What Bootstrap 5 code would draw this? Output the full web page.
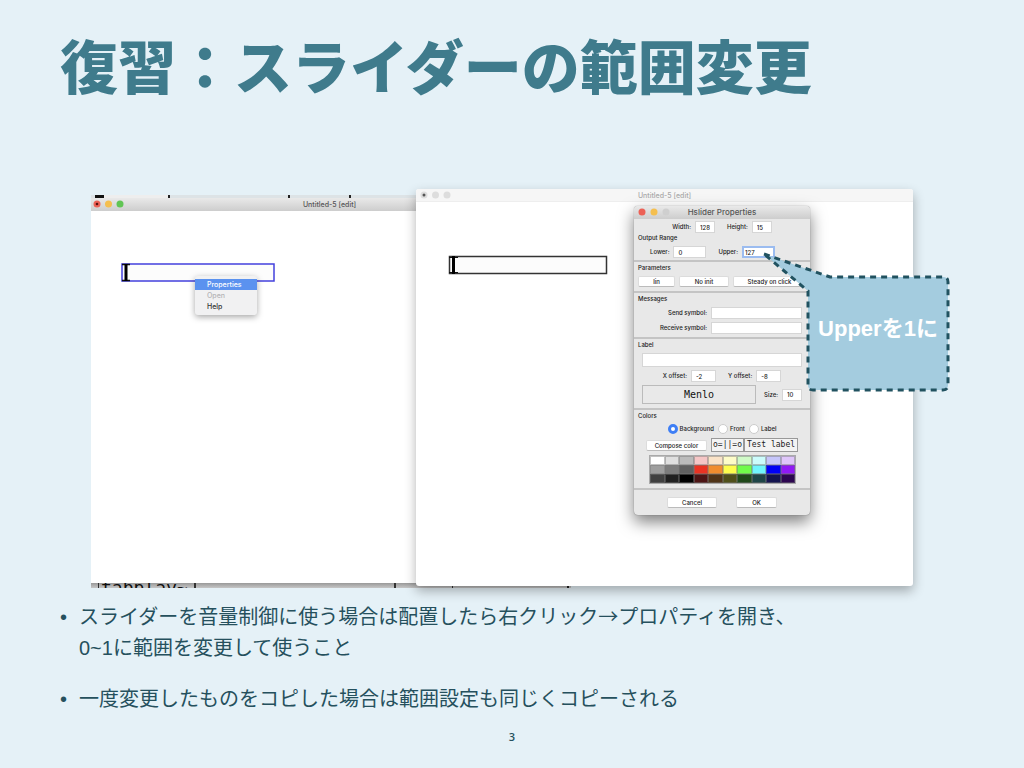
<!DOCTYPE html>
<html lang="ja">
<head>
<meta charset="utf-8">
<meta name="viewport" content="width=device-width, initial-scale=1">
<title>復習：スライダーの範囲変更</title>
<link href="https://cdn.jsdelivr.net/npm/bootstrap@5.3.0/dist/css/bootstrap.min.css" rel="stylesheet">
<style>
  body { background: #e5f1f7; color: #25505d; font-family: "Liberation Sans", "Noto Sans CJK JP", sans-serif; }
  .slide { padding: 28px 60px 0; }
  .slide h1 { font: 900 58px/72px "Noto Sans CJK JP", sans-serif; color: #3f7b8c; }
  .desktop { margin: 89px 51px 0 31px; font-family: Inter, sans-serif; font-weight: 500; color: #333; }
  .pane-left { flex: 325 1 0; min-width: 0; margin-top: 6px; position: relative; }
  .pane-right { flex: 497 1 0; min-width: 0; height: 397px; background: #fff; border-radius: 3px; box-shadow: 0 5px 12px rgba(0,0,0,.3); position: relative; }

  /* windows peeking out behind the left one */
  .peek-top { height: 3px; background: linear-gradient(90deg, transparent 4px, #111 4px 13px, #eee 13px 77px, #222 77px 79px, transparent 79px 197px, #222 197px 199px, transparent 199px 258px, #222 258px 260px, transparent 260px), #dde3e6; }
  .peek-bottom { width: 480px; height: 5px; overflow: hidden; color: #111; font: 18px/20px "DejaVu Sans Mono", monospace; background: linear-gradient(90deg, transparent 7px, #333 7px 8px, transparent 8px 103px, #333 103px 105px, transparent 105px 303px, #333 303px 305px, transparent 305px 361px, #333 361px 362px, transparent 362px 476px, #222 476px 478px, transparent 478px), linear-gradient(#999, #c6c6c6); }
  .peek-bottom span { display: block; margin: -5px 0 0 10px; }

  .titlebar { height: 13px; font-size: 7px; line-height: 13px; color: #555; background: linear-gradient(#e9e9e9, #cdcdcd); position: relative; text-align: center; }
  .pane-right > .titlebar { background: #f6f6f6; color: #aaa; border-radius: 3px 3px 0 0; border-bottom: 1px solid #eee; }
  .pane-left > .titlebar { padding-left: 152px; }
  .titlebar svg { position: absolute; left: 2px; top: 2px; }
  .canvas-left { height: 372px; background: #fff; position: relative; }
  .hslider { position: absolute; display: block; }
  .ctx-menu { position: absolute; left: 104px; top: 65px; width: 62px; padding: 3px 0; background: #f1f1f2; border-radius: 3px; box-shadow: 0 2px 6px rgba(0,0,0,.35); font-size: 7px; line-height: 11px; }
  .ctx-menu button { display: block; width: 100%; border: 0; padding: 0 0 0 12px; background: none; text-align: left; color: #333; font-weight: 500; }
  .ctx-menu button.picked { background: #5b92ef; color: #fff; }
  .ctx-menu button:disabled { color: #b4b4b6; }

  .dialog-box { position: absolute; left: 218px; top: 17px; width: 176px; background: #e8e8e8; border-radius: 4px; box-shadow: 0 7px 16px rgba(0,0,0,.5), 0 0 1px #777; font-size: 6px; line-height: 10px; color: #222; }
  .dialog-box > .titlebar { font-size: 8px; border-radius: 4px 4px 0 0; }
  .dialog-box > .titlebar svg { left: 4px; }
  .dialog-box fieldset { border-bottom: 2px solid #c4c4c4; padding: 1px 8px 0; height: 71px; }
  .dialog-box legend { font-size: 6px; line-height: 10px; margin: 0 0 3px -4px; }
  .dialog-box .range-set { height: 29px; padding-top: 0; }
  .dialog-box .param-set { height: 31px; }
  .dialog-box .message-set { height: 46px; }
  .dialog-box .color-set { height: 80px; }
  .dialog-box .param-keys { margin: 0 -4px; }
  .size-row { padding-top: 2px; }
  .dialog-box input[type=text] { border: 1px solid #d6d6d6; background: #fff; height: 12px; padding: 0 4px; font: 500 6px/10px Inter, sans-serif; color: #222; min-width: 0; border-radius: 0; }
  .dialog-box input.editing { border: 2px solid #9bbcf0; padding: 0 1px; }
  .dialog-box input.wide { width: 91px; }
  .dialog-box input.label-text { height: 14px; }
  .dialog-box .key { height: 11px; border: 1px solid #dcdcdc; border-bottom-color: #bbb; background: #fff; border-radius: 2px; padding: 0; font-size: 6px; font-weight: 500; line-height: 9px; color: #222; }
  .w20 { width: 20px; } .w24 { width: 25px; } .w33 { width: 33px; }
  .w37 { width: 37px; } .w41 { width: 41px; } .w50 { width: 50px; } .w61 { width: 61px; }
  .dialog-box input[type=radio] { appearance: none; width: 10px; height: 10px; border: 1px solid #ccc; border-radius: 50%; background: #fff; margin: 0 2px 0 0; }
  .dialog-box input[type=radio]:checked { border: 3px solid #3f7ff5; }
  .gp { gap: 4px; }
  .gap3 { margin-top: 3px; }
  .mono-box { font: 8px/12px "DejaVu Sans Mono", monospace; border: 1px solid #999; background: #f3f3f3; text-align: center; }
  .palette { display: grid; grid-template-columns: repeat(10, 1fr); margin: 3px 6px 0 7px; border: 1px solid #aaa; }
  .palette button { height: 9px; border: 1px solid rgba(120,120,120,.45); padding: 0; }
  .font-key { flex: 1; height: 19px; border: 1px solid #bbb; background: #e9e9e9; font: 10px/17px "DejaVu Sans Mono", monospace; padding: 0; color: #111; }
  .end-keys { gap: 19px; padding: 7px 0; }

  .callout { position: absolute; left: 126px; top: 44px; width: 192px; height: 144px; font: 700 22px/32px "Liberation Sans", "Noto Sans CJK JP", sans-serif; color: #fff; }
  .callout svg { position: absolute; inset: 0; }
  .callout p { position: absolute; left: 48px; right: 4px; top: 63px; margin: 0; text-align: center; white-space: nowrap; }

  .notes { margin: 14px 0 0; padding: 0; list-style: none; font-size: 20px; line-height: 31px; }
  .notes li { display: flex; margin-bottom: 20px; }
  .notes li::before { content: "•"; width: 19px; flex: none; }
  .arrow { font-family: "Noto Sans CJK JP", sans-serif; line-height: 1; }
  .page-no { font: 600 11px/16px "Open Sans", sans-serif; margin-top: -6px; }
</style>
</head>
<body>
<main class="slide">
  <h1 class="m-0">復習：スライダーの範囲変更</h1>

  <section class="desktop d-flex align-items-start">
    <div class="pane-left">
      <div class="peek-top"></div>
      <div class="titlebar">Untitled-5 [edit]
        <svg width="34" height="8"><circle cx="4" cy="4" r="3.5" fill="#ec6156"/><circle cx="4" cy="4" r="1.3" fill="#511"/><circle cx="15.500" cy="4" r="3.500" fill="#f5bf4f"/><circle cx="27" cy="4" r="3.500" fill="#61c554"/></svg>
      </div>
      <div class="canvas-left">
        <svg class="hslider" style="left:30px;top:52px" width="154" height="20"><rect x="1" y="1" width="152" height="17" fill="#fcfcfc" stroke="#4340dd" stroke-width="1.500"/><path d="M1 1.500h8M1 17.500h8" stroke="#111" stroke-width="1.500"/><path d="M5 1v17" stroke="#000" stroke-width="3"/></svg>
        <div class="ctx-menu">
          <button type="button" class="picked">Properties</button>
          <button type="button" disabled>Open</button>
          <button type="button">Help</button>
        </div>
      </div>
      <div class="peek-bottom"><span>tabplay~</span></div>
    </div>

    <div class="pane-right">
      <div class="titlebar">Untitled-5 [edit]
        <svg style="left:4px" width="34" height="8"><circle cx="4" cy="4" r="3.500" fill="#ddd"/><circle cx="4" cy="4" r="1.500" fill="#555"/><circle cx="15.500" cy="4" r="3.500" fill="#ddd"/><circle cx="27" cy="4" r="3.500" fill="#ddd"/></svg>
      </div>
      <svg class="hslider" style="left:32px;top:66px" width="160" height="20"><rect x="1.500" y="1.500" width="157" height="17" fill="#fcfcfc" stroke="#333" stroke-width="1.500"/><path d="M1 2.500h9M1 17.500h9" stroke="#111"/><path d="M5.500 1v18" stroke="#000" stroke-width="3"/></svg>

      <form class="dialog-box">
        <div class="titlebar">Hslider Properties
          <svg width="34" height="8"><circle cx="4" cy="4" r="3.500" fill="#ec6156"/><circle cx="16" cy="4" r="3.500" fill="#f5bf4f"/><circle cx="28" cy="4" r="3.500" fill="#cfcfcf"/></svg>
        </div>
        <div class="size-row d-flex justify-content-center align-items-center gp">
          <label for="w">Width:</label><input id="w" class="w20" type="text" value="128">
          <label for="h" class="ms-2">Height:</label><input id="h" class="w20" type="text" value="15">
        </div>
        <fieldset class="range-set">
          <legend>Output Range</legend>
          <div class="d-flex align-items-center gp ps-2">
            <label for="lo">Lower:</label><input id="lo" class="w33" type="text" value="0">
            <label for="up" class="ms-2">Upper:</label><input id="up" class="w33 editing" type="text" value="127">
          </div>
        </fieldset>
        <fieldset class="param-set">
          <legend>Parameters</legend>
          <div class="param-keys d-flex gp">
            <button type="button" class="key w37">lin</button>
            <button type="button" class="key w50">No init</button>
            <button type="button" class="key flex-fill">Steady on click</button>
          </div>
        </fieldset>
        <fieldset class="message-set">
          <legend>Messages</legend>
          <div class="d-flex justify-content-end align-items-center gp"><label for="snd">Send symbol:</label><input id="snd" type="text" class="wide"></div>
          <div class="d-flex justify-content-end align-items-center gp gap3"><label for="rcv">Receive symbol:</label><input id="rcv" type="text" class="wide"></div>
        </fieldset>
        <fieldset>
          <legend>Label</legend>
          <input aria-label="Label" type="text" class="label-text d-block w-100">
          <div class="d-flex justify-content-center align-items-center gp gap3">
            <label for="xo">X offset:</label><input id="xo" class="w24" type="text" value="-2">
            <label for="yo" class="ms-2">Y offset:</label><input id="yo" class="w24" type="text" value="-8">
          </div>
          <div class="d-flex align-items-center gp gap3">
            <button type="button" class="font-key">Menlo</button>
            <label for="sz" class="ms-1">Size:</label><input id="sz" class="w20" type="text" value="10">
          </div>
        </fieldset>
        <fieldset class="color-set">
          <legend>Colors</legend>
          <div class="d-flex justify-content-center gp">
            <label class="d-flex align-items-center"><input type="radio" name="c" checked>Background</label>
            <label class="d-flex align-items-center"><input type="radio" name="c">Front</label>
            <label class="d-flex align-items-center"><input type="radio" name="c">Label</label>
          </div>
          <div class="d-flex align-items-center mt-1 ps-1">
            <button type="button" class="key w61">Compose color</button>
            <span class="mono-box w33 ms-1">o=||=o</span><span class="mono-box flex-fill me-1">Test label</span>
          </div>
          <div class="palette" id="palette"></div>
        </fieldset>
        <div class="end-keys d-flex justify-content-center">
          <button type="button" class="key w50">Cancel</button>
          <button type="button" class="key w41">OK</button>
        </div>

        <div class="callout">
          <svg width="192" height="144"><path d="M4 4L70 27H183Q188 27 188 32V135Q188 140 183 140H53Q48 140 48 135V41Z" fill="#a4ccdf" stroke="#215260" stroke-width="3" stroke-dasharray="6 5"/></svg>
          <p>Upperを1に</p>
        </div>
      </form>
    </div>
  </section>

  <ul class="notes">
    <li><span>スライダーを音量制御に使う場合は配置したら右クリック<span class="arrow">→</span>プロパティを開き、<br>0~1に範囲を変更して使うこと</span></li>
    <li><span>一度変更したものをコピした場合は範囲設定も同じくコピーされる</span></li>
  </ul>
  <footer class="page-no text-center">3</footer>
</main>
<script src="https://cdn.jsdelivr.net/npm/bootstrap@5.3.0/dist/js/bootstrap.bundle.min.js"></script>
<script>
  const colors = ['#fff','#dfdfdf','#bbb','#f5c6c6','#fae3c8','#fdfcc8','#d0fac8','#ccfcfc','#c6c6fa','#dfc6fa',
    '#9e9e9e','#7c7c7c','#606060','#ea3323','#f08c2e','#fdfd4d','#70fb4a','#70f5fd','#0000f5','#9019f5',
    '#404040','#202020','#000','#4d1515','#503418','#50501b','#20481a','#1f4548','#141450','#2c0650'];
  for (const c of colors) {
    const b = document.createElement('button');
    b.type = 'button';
    b.setAttribute('aria-label', c);
    b.style.backgroundColor = c;
    document.getElementById('palette').append(b);
  }
</script>
</body>
</html>
